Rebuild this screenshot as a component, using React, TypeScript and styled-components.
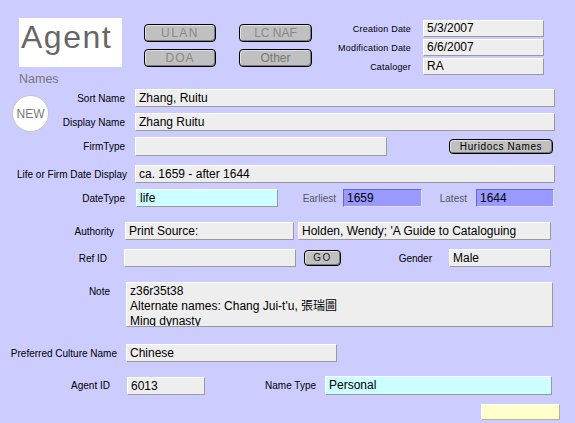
import { createGlobalStyle, styled } from 'styled-components';

const GlobalStyle = createGlobalStyle`
  body {
    margin: 0;
    font-family: "Liberation Sans", Arial, sans-serif;
  }
`;

const Page = styled.div`
  width: 575px;
  height: 423px;
  background-color: #ccccff;
  overflow: hidden;
  color: #000;
`;

const Header = styled.div`
  display: flex;
  align-items: flex-start;
  height: 89px;
  padding-left: 19px;
  box-sizing: border-box;
`;

const Brand = styled.div`
  margin-top: 18px;
  width: 103px;
`;

const AgentBox = styled.div`
  height: 49px;
  box-sizing: border-box;
  padding: 1px 0 0 2px;
  background-color: #fff;
  color: #666;
  font-size: 32px;
  line-height: 36px;
  letter-spacing: 1.5px;
`;

const Names = styled.div`
  margin-top: 5px;
  font-size: 12.5px;
  line-height: 15px;
  color: #777;
`;

const ButtonGrid = styled.div`
  display: grid;
  grid-template-columns: 72px 73px;
  grid-auto-rows: 18px;
  column-gap: 23px;
  row-gap: 7px;
  margin: 24px 0 0 22px;
`;

interface IButtonProps {
  $w: number;
  $h: number;
  $color?: string;
  $size?: number;
  $spacing?: number;
  $ml?: number;
}

const Button = styled.button<IButtonProps>`
  width: ${(props) => props.$w}px;
  height: ${(props) => props.$h}px;
  margin: 0 0 0 ${(props) => props.$ml ?? 0}px;
  padding: 0;
  flex-shrink: 0;
  box-sizing: border-box;
  background-color: #c0c0c0;
  border: 1px solid #000;
  border-radius: 4px;
  box-shadow: inset 1px 1px 0 #e2e2e2, inset -1px -1px 0 #7a7a7a;
  color: ${(props) => props.$color ?? '#000'};
  font-family: "Liberation Sans", Arial, sans-serif;
  font-size: ${(props) => props.$size ?? 12}px;
  letter-spacing: ${(props) => props.$spacing ?? 0}px;
  line-height: 1;
  text-align: center;
`;

const MetaGrid = styled.div`
  display: grid;
  grid-template-columns: 80px 121px;
  grid-auto-rows: 17px;
  column-gap: 12px;
  row-gap: 2px;
  align-items: center;
  margin: 20px 0 0 19px;
`;

const MetaLabel = styled.div`
  font-size: 9px;
  letter-spacing: 0.2px;
  text-align: right;
`;

type Tone = 'gray' | 'cyan' | 'blue' | 'yellow';

const tones: Record<Tone, { bg: string; border: string }> = {
  gray: { bg: '#eeeeee', border: '#ffffff #999999 #999999 #ffffff' },
  cyan: { bg: '#ccffff', border: '#ffffff #999999 #999999 #ffffff' },
  blue: { bg: '#9999ff', border: '#6666cc #ddddff #ddddff #6666cc' },
  yellow: { bg: '#ffffcc', border: '#ffffff #b8b090 #b8b090 #ffffff' },
};

interface IFieldProps {
  $w: number;
  $h?: number;
  $tone?: Tone;
  $ml?: number;
}

const Field = styled.div<IFieldProps>`
  width: ${(props) => props.$w}px;
  height: ${(props) => props.$h ?? 18}px;
  margin-left: ${(props) => props.$ml ?? 0}px;
  flex-shrink: 0;
  box-sizing: border-box;
  padding: 0 3px;
  background-color: ${(props) => tones[props.$tone ?? 'gray'].bg};
  border: 1px solid;
  border-color: ${(props) => tones[props.$tone ?? 'gray'].border};
  font-size: 12px;
  line-height: ${(props) => (props.$h ?? 18) - 2}px;
  white-space: nowrap;
  overflow: hidden;
`;

const NoteField = styled(Field)`
  padding: 1px 3px 0;
  line-height: 15px;
  white-space: normal;
  font-family: "Liberation Sans", "Noto Sans CJK TC", sans-serif;
`;

const NameBlock = styled.div`
  display: flex;
  align-items: flex-start;
`;

const NewBadge = styled.div`
  width: 37px;
  height: 37px;
  margin: 6px 0 0 12px;
  flex-shrink: 0;
  box-sizing: border-box;
  border: 1px solid #c4c4c4;
  border-radius: 50%;
  background-color: #fff;
  color: #777;
  font-size: 12px;
  display: flex;
  align-items: center;
  justify-content: center;
`;

const Stack = styled.div`
  display: flex;
  flex-direction: column;
  gap: 6px;
`;

interface IRowProps {
  $mt?: number;
  $top?: boolean;
}

const Row = styled.div<IRowProps>`
  display: flex;
  align-items: ${(props) => (props.$top ? 'flex-start' : 'center')};
  margin-top: ${(props) => props.$mt ?? 0}px;
`;

interface ILabelProps {
  $w: number;
  $gap?: number;
  $muted?: boolean;
  $pt?: number;
}

const Label = styled.div<ILabelProps>`
  width: ${(props) => props.$w}px;
  margin-right: ${(props) => props.$gap ?? 10}px;
  padding-top: ${(props) => props.$pt ?? 0}px;
  flex-shrink: 0;
  box-sizing: border-box;
  text-align: right;
  white-space: nowrap;
  font-size: 10px;
  color: ${(props) => (props.$muted ? '#555' : '#000')};
`;

function App() {
  return (
    <Page>
      <GlobalStyle />
      <Header>
        <Brand>
          <AgentBox>Agent</AgentBox>
          <Names>Names</Names>
        </Brand>
        <ButtonGrid>
          <Button $w={72} $h={18} $color='#888' $spacing={1.5}>
            ULAN
          </Button>
          <Button $w={73} $h={18} $color='#888'>
            LC NAF
          </Button>
          <Button $w={72} $h={18} $color='#888' $spacing={1}>
            DOA
          </Button>
          <Button $w={73} $h={18} $color='#777'>
            Other
          </Button>
        </ButtonGrid>
        <MetaGrid>
          <MetaLabel>Creation Date</MetaLabel>
          <Field $w={121} $h={17}>
            5/3/2007
          </Field>
          <MetaLabel>Modification Date</MetaLabel>
          <Field $w={121} $h={17}>
            6/6/2007
          </Field>
          <MetaLabel>Cataloger</MetaLabel>
          <Field $w={121} $h={17}>
            RA
          </Field>
        </MetaGrid>
      </Header>

      <NameBlock>
        <NewBadge>NEW</NewBadge>
        <Stack>
          <Row>
            <Label $w={76}>Sort Name</Label>
            <Field $w={420}>Zhang, Ruitu</Field>
          </Row>
          <Row>
            <Label $w={76}>Display Name</Label>
            <Field $w={420}>Zhang Ruitu</Field>
          </Row>
        </Stack>
      </NameBlock>

      <Row $mt={5}>
        <Label $w={125}>FirmType</Label>
        <Field $w={252} $h={19} />
        <Button $w={104} $h={15} $ml={62} $size={10} $spacing={0.6}>
          Huridocs Names
        </Button>
      </Row>

      <Row $mt={9}>
        <Label $w={127} $gap={8}>
          Life or Firm Date Display
        </Label>
        <Field $w={420}>ca. 1659 - after 1644</Field>
      </Row>

      <Row $mt={6}>
        <Label $w={125} $gap={11}>
          DateType
        </Label>
        <Field $w={142} $tone='cyan'>
          life
        </Field>
        <Label $w={58} $gap={7} $muted>
          Earliest
        </Label>
        <Field $w={79} $tone='blue'>
          1659
        </Field>
        <Label $w={45} $gap={9} $muted>
          Latest
        </Label>
        <Field $w={78} $tone='blue'>
          1644
        </Field>
      </Row>

      <Row $mt={15}>
        <Label $w={114} $gap={11}>
          Authority
        </Label>
        <Field $w={169}>Print Source:</Field>
        <Field $w={253} $ml={4}>
          Holden, Wendy; 'A Guide to Cataloguing
        </Field>
      </Row>

      <Row $mt={9}>
        <Label $w={107} $gap={17}>
          Ref ID
        </Label>
        <Field $w={172} />
        <Button $w={37} $h={16} $ml={8} $size={10} $spacing={1.5} $color='#222'>
          GO
        </Button>
        <Label $w={91} $gap={17}>
          Gender
        </Label>
        <Field $w={102}>Male</Field>
      </Row>

      <Row $mt={15} $top>
        <Label $w={110} $gap={16} $pt={4}>
          Note
        </Label>
        <NoteField $w={427} $h={45}>
          z36r35t38
          <br />
          Alternate names: Chang Jui-t'u, 張瑞圖
          <br />
          Ming dynasty
        </NoteField>
      </Row>

      <Row $mt={17}>
        <Label $w={117} $gap={9}>
          Preferred Culture Name
        </Label>
        <Field $w={211}>Chinese</Field>
      </Row>

      <Row $mt={14}>
        <Label $w={110} $gap={17}>
          Agent ID
        </Label>
        <Field $w={78}>6013</Field>
        <Label $w={111} $gap={9}>
          Name Type
        </Label>
        <Field $w={227} $h={19} $tone='cyan'>
          Personal
        </Field>
      </Row>

      <Row $mt={9}>
        <Field $w={79} $h={16} $ml={481} $tone='yellow' />
      </Row>
    </Page>
  );
}

export default App;
